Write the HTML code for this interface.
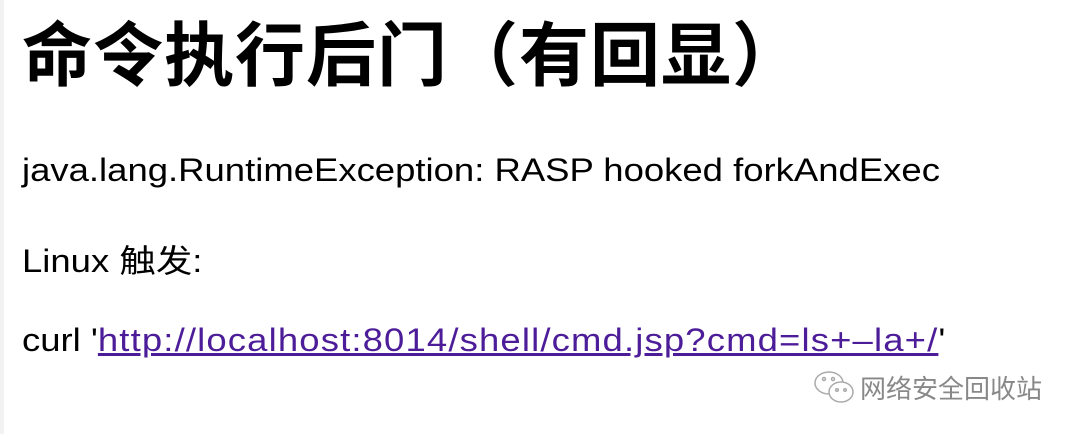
<!DOCTYPE html>
<html><head><meta charset="utf-8"><style>
html,body{margin:0;padding:0;background:#fff;width:1080px;height:434px;overflow:hidden;position:relative}
body{font-family:"Liberation Sans","Noto Sans CJK SC",sans-serif;color:#000}
.t{position:absolute;left:22px;top:0px;font-size:70px;font-weight:bold;white-space:nowrap;letter-spacing:1px}
.l{position:absolute;left:22px;font-size:32px;white-space:nowrap;transform:scaleX(1.14);transform-origin:0 0}
a{color:#4d1d99;text-decoration:underline;letter-spacing:1px}
.bar{position:absolute;left:0;top:0;width:4px;height:434px;background:#f2f2f2}
.wm{position:absolute;left:860px;top:369px;font-size:26px;color:#888;white-space:nowrap}
</style></head><body>
<div class="bar"></div>
<div class="t">命令执行后门（有回显）</div>
<div class="l" style="top:152px">java.lang.RuntimeException: RASP hooked forkAndExec</div>
<div class="l" style="top:236px">Linux 触发:</div>
<div class="l" style="top:322px">curl '<a>http://localhost:8014/shell/cmd.jsp?cmd=ls+–la+/</a>'</div>
<svg style="position:absolute;left:812px;top:370px" width="46" height="36" viewBox="0 0 46 36" fill="none" stroke="#aaa" stroke-width="1.5">
<ellipse cx="17" cy="13" rx="14" ry="11"/><ellipse cx="29" cy="22" rx="12" ry="10" fill="#fff"/>
<circle cx="12" cy="9" r="1.5"/><circle cx="21" cy="9" r="1.5"/><circle cx="25" cy="20" r="1.3"/><circle cx="33" cy="20" r="1.3"/>
</svg>
<div class="wm">网络安全回收站</div>
</body></html>
